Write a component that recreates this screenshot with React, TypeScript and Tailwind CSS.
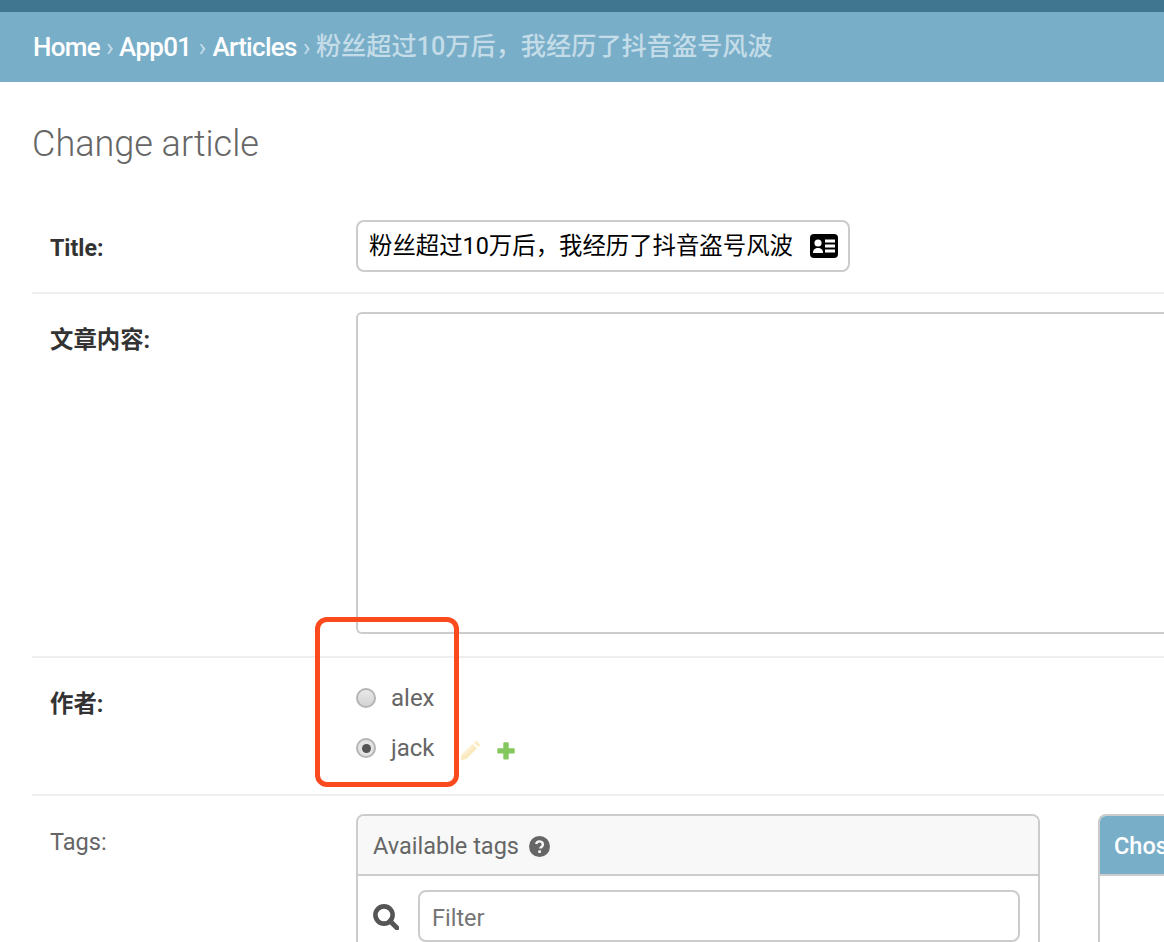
const cjk = "font-['Roboto','Noto_Sans_CJK_SC',sans-serif]";

function PencilIcon() {
  return (
    <svg viewBox="0 0 20 20" className="w-[20px] h-[20px] ml-[25px] mt-[6px]">
      <path d="M0.5 19.5L2 13.6 12.6 3 17 7.4 6.4 18z" fill="#fbeac0" />
      <path d="M14 1.6l1-1a1.4 1.4 0 0 1 2 0l2.4 2.4a1.4 1.4 0 0 1 0 2l-1 1z" fill="#fbeac0" />
      <path d="M4 13.5L12.5 5" stroke="#ffffff" strokeWidth="0.8" />
    </svg>
  );
}

function PlusIcon() {
  return (
    <svg viewBox="0 0 18 18" className="w-[18px] h-[18px] ml-[17px] mt-[6px]">
      <path d="M6.3 1.2a1 1 0 0 1 1-1h3.4a1 1 0 0 1 1 1v5h5a1 1 0 0 1 1 1v3.4a1 1 0 0 1-1 1h-5v5a1 1 0 0 1-1 1H7.300a1 1 0 0 1-1-1v-5h-5a1 1 0 0 1-1-1V7.200a1 1 0 0 1 1-1h5z" fill="#84c75c" />
    </svg>
  );
}

function TagsBox() {
  return (
    <div className="w-[684px] shrink-0 h-[200px] rounded-t-[8px] border-2 border-[#cccccc] border-b-0">
      <div className="h-[60px] bg-[#f8f8f8] border-b-2 border-[#cccccc] flex items-center pl-[15px] pt-[2px] gap-[10px] rounded-t-[6px]">
        <span className="text-[23.5px] text-[#666666] pt-[2px]">Available tags</span>
        <svg viewBox="0 0 24 24" className="w-[21px] h-[21px]">
          <circle cx="12" cy="12" r="12" fill="#666666" />
          <path d="M8.2 9.2a3.9 3.9 0 0 1 7.7.6c0 2.6-3 2.700-3 4.600" fill="none" stroke="#f8f8f8" strokeWidth="2.8" />
          <rect x="10.600" y="16.400" width="3" height="3" fill="#f8f8f8" />
        </svg>
      </div>
      <div className="flex items-center pl-[15px] pt-[14px]">
        <svg viewBox="0 0 26 26" className="w-[26px] h-[26px] mt-[2px] shrink-0">
          <circle cx="11" cy="11" r="8.6" fill="none" stroke="#555555" strokeWidth="4.6" />
          <path d="M17 17l7 7" stroke="#555555" strokeWidth="4.8" strokeLinecap="round" />
        </svg>
        <div className="ml-[19px] w-[602px] h-[52px] rounded-[8px] border-2 border-[#cccccc] flex items-center pl-[12px]">
          <span className="text-[23.5px] text-[#757575] pt-[6px]">Filter</span>
        </div>
      </div>
    </div>
  );
}

export default function App() {
  return (
    <div className={`relative w-[1164px] h-[942px] overflow-hidden bg-white ${cjk}`}>
      <div className="h-[12px] bg-[#417690]" />
      <div className="h-[70px] bg-[#79aec8] flex items-center pl-[33px] text-[26px] tracking-[-0.7px] whitespace-nowrap">
        <span className="font-medium text-white">Home</span>
        <span className="text-[#c4dce8] mx-[6px]">›</span>
        <span className="font-medium text-white">App01</span>
        <span className="text-[#c4dce8] ml-[7px] mr-[7px]">›</span>
        <span className="font-medium text-white">Articles</span>
        <span className="text-[#c4dce8] mx-[6px]">›</span>
        <span className="font-medium text-[#c4dce8] tracking-normal text-[25.2px]">粉丝超过10万后，我经历了抖音盗号风波</span>
      </div>

      <div className="pl-[32px]">
        <h1 className="text-[36px] font-light text-[#666666] h-[138px] pt-[38px] leading-[48px]">Change article</h1>

        {/* Title */}
        <div className="flex border-b-2 border-[#eeeeee] h-[74px]">
          <label className="w-[324px] shrink-0 pl-[18px] text-[23.2px] font-bold text-[#333333] leading-[56px]">Title:</label>
          <div className="w-[494px] h-[52px] rounded-[8px] border-2 border-[#cccccc] flex items-center justify-between pl-[11px] pr-[10px]">
            <span className="text-[23.4px] text-black whitespace-nowrap pt-[2px]">粉丝超过10万后，我经历了抖音盗号风波</span>
            <svg viewBox="0 0 28 24" className="w-[28px] h-[24px]">
              <rect x="0" y="0" width="28" height="24" rx="4" fill="#000000" />
              <circle cx="8" cy="9" r="3.6" fill="#ffffff" />
              <path d="M3 19c0-3.600 2-5 5-5s5 1.400 5 5z" fill="#ffffff" />
              <rect x="15" y="5.500" width="10" height="3" fill="#ffffff" />
              <rect x="15" y="10.500" width="10" height="3" fill="#ffffff" />
              <rect x="15" y="15.500" width="10" height="3" fill="#ffffff" />
            </svg>
          </div>
        </div>

        {/* Content */}
        <div className="flex border-b-2 border-[#eeeeee] h-[364px] pt-[18px]">
          <label className="w-[324px] shrink-0 pl-[18px] text-[23.4px] font-bold text-[#333333] leading-[56px]">文章内容:</label>
          <div className="grow h-[322px] rounded-l-[6px] border-2 border-r-0 border-[#cccccc]" />
        </div>

        {/* Author */}
        <div className="flex border-b-2 border-[#eeeeee] h-[138px]">
          <label className="w-[324px] shrink-0 pl-[18px] text-[23.4px] font-bold text-[#333333] pt-[29px]">作者:</label>
          <div className="pt-[15px]">
            <div className="flex items-center h-[50px]">
              <span className="w-[20px] h-[20px] rounded-full border-2 border-[#b5b5b5] bg-gradient-to-b from-[#e8e8e8] to-[#d4d4d4]" />
              <span className="ml-[15px] text-[24px] text-[#666666]">alex</span>
            </div>
            <div className="flex items-center h-[50px]">
              <span className="w-[20px] h-[20px] rounded-full border-2 border-[#b5b5b5] bg-[#e4e4e4] flex items-center justify-center">
                <span className="w-[9px] h-[9px] rounded-full bg-[#555555]" />
              </span>
              <span className="ml-[15px] text-[24px] text-[#666666]">jack</span>
              <PencilIcon />
              <PlusIcon />
            </div>
          </div>
        </div>

        {/* Tags */}
        <div className="flex pt-[18px]">
          <label className="w-[324px] shrink-0 pl-[18px] text-[23.6px] text-[#666666] leading-[56px] -mt-[18px] pt-[18px]">Tags:</label>
          <TagsBox />
          <div className="ml-[58px] grow h-[200px] rounded-tl-[8px] border-l-2 border-t-2 border-[#cccccc] min-w-0">
            <div className="h-[60px] bg-[#79aec8] flex items-center pl-[14px] pt-[4px] rounded-tl-[6px] border-b-2 border-[#cccccc] overflow-hidden whitespace-nowrap">
              <span className="text-[23.5px] font-medium text-white">Chosen tags</span>
            </div>
          </div>
        </div>
      </div>

      {/* red annotation */}
      <div className="absolute left-[315px] top-[617px] w-[144px] h-[170px] rounded-[12px] border-[5.5px] border-[#fc4a1f]" />
    </div>
  );
}
